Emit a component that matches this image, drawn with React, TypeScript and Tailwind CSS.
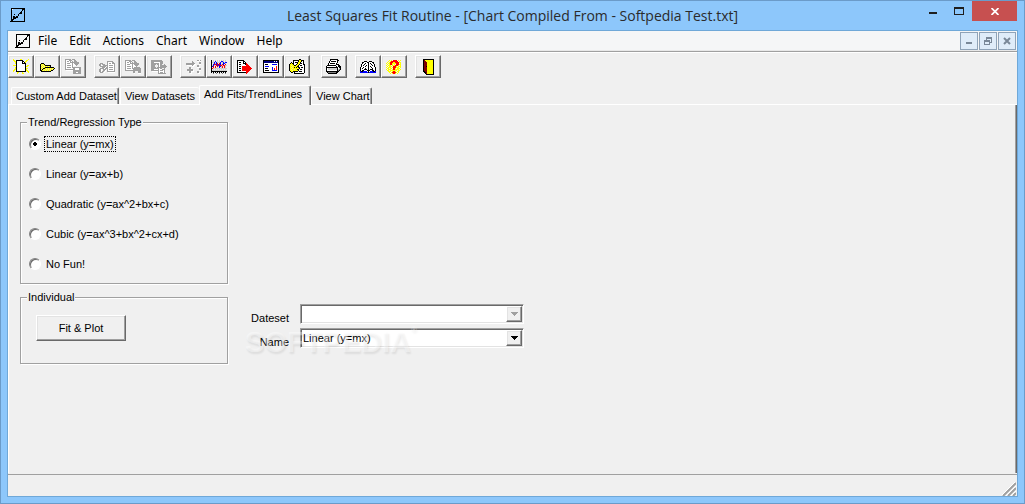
import React, { useState } from "react";

const palette: Record<string, string> = {
  K: "#000000",
  W: "#ffffff",
  G: "#a0a0a0",
  S: "#808080",
  L: "#d0d0d0",
  Y: "#ffff00",
  P: "#f5f08a",
  R: "#ff0000",
  M: "#800000",
  B: "#0000ff",
  N: "#000080",
  C: "#00d8e8",
};

// Each string is one pixel row, a dot is transparent
const icons = {
  app: [
    ".KKKKKKKKKKKKKK",
    ".KW.........KKK",
    ".K..........K.K",
    ".K.........K..K",
    ".K........KK..K",
    ".K.......KKK..K",
    ".K..K...K.....K",
    ".K......K.....K",
    ".K.KK.KK......K",
    ".K.KKKKK......K",
    ".K.KKK........K",
    ".KKK..........K",
    ".KK...........K",
    "KKKKKKKKKKKKKKK",
  ],
  newFile: [
    "Y......YY......Y",
    "YY.KKKKKKK...YY.",
    ".YYKWWWWWKK.YY..",
    "..YKWWWWWKWKY...",
    "..YKWWWWWKKKK...",
    "...KWWWWWWWWK...",
    "YYYKWWWWWWWWK.YY",
    "...KWWWWWWWWKYY.",
    "..YKWWWWWWWWK...",
    "..YKWWWWWWWWKYY.",
    ".YYKWWWWWWWWKY..",
    "YY.KWWWWWWWWKYY.",
    "Y..KKKKKKKKKK.YY",
    "....YY...Y.....Y",
    "....Y....YY.....",
  ],
  open: [
    "...............",
    ".KKK...........",
    "KYPYK..........",
    "KPYPYKKKKKK....",
    "KYPYPYPYPYK....",
    "KPYPYKKKKKKKKK.",
    "KYPKKYPYPYPYPYK",
    "KPKYPYPYPYPYPK.",
    "KKYPYPYPYPYKK..",
    ".KKKKKKKKKK....",
  ],
  saveAll: [
    "GGGGGG.GGG......",
    "GWWWGGG..GG.....",
    "GWGGWGWG.GGG....",
    "GWWWWGGGGGGGGG..",
    "GWGGGWWGWGGGGG..",
    "GWWWWWWGWWGGG...",
    "GWGGGGWGWWWG....",
    "GWWWWWWGW.......",
    "GWGGGGWGGGGGGGGG",
    "GWWWWWWWGGWWWWGG",
    "GGGGGGGGGGWWWWGG",
    ".WWWWWWWGGGGGGGG",
    "........GGGGGGGG",
    "........GGGWWGGG",
    "........GGGGGGGG",
  ],
  cut: [
    "........GGGGGG..",
    "........GWWWWGG.",
    ".GGG....GWGGWGGG",
    "GG.GGG..GWWWWWWG",
    "GGW.GGGGGWGGGGWG",
    ".GGGGGG.GWWWWWWG",
    "...GGGWGGWGGGGWG",
    ".GGGGWGGGWWWWWWG",
    "GGW.GGG.GWGGGGWG",
    "GGW.GGW.GWWWWWWG",
    "GGWGG.W.GGGGGGGG",
    ".GGG.W...WWWWWWW",
  ],
  copy: [
    "GGGGGG.GGG......",
    "GWWWGGG..GG.....",
    "GWGGWGWG.GGG....",
    "GWWWWGGGGGGGGG..",
    "GWGGGWWGWGGGGG..",
    "GWWWWWWGWWGGG...",
    "GWGGGGWGWWWG....",
    "GWWWWWWGWGGGGGG.",
    "GWGGGGWGGGGGGGGG",
    "GWWWWWWWGGGGGGGG",
    "GGGGGGGGGGGGGGGG",
    "........GG...GGG",
    "........GG...GGG",
    ".........W...WWW",
  ],
  paste: [
    "GGGGGGGGGGG.....",
    "GGGGGGGGGGGG....",
    "GGGWWWWWWGGG....",
    "GGGGGGGGWGGG....",
    "GGGGG.GGWGG..G..",
    "GGGG...GWGGGGGG.",
    "GGGG...GWGGGGGGG",
    "GGGGG.GGGGGGGGG.",
    "GGGGGGGGWGG..G..",
    "GGGWWWWGWWWGGG..",
    "GGGGGGGGWGGGWG..",
    ".WWWWWWGWWWWWG..",
    ".......GWGGGWG..",
    ".......GGGGGGGG.",
  ],
  addPoint: [
    "...........GGWG",
    "......G....WW.W",
    "......GG.....GG",
    "GGGGGGGGG....GG",
    "GGGGGGGGWW...WW",
    ".WWWWWGWW..GG..",
    "......WW...GG..",
    "...GG......WWW.",
    "...GGW.......GG",
    ".GGGGGG......GG",
    ".GGGGGGW.....WW",
    "..WGGWWW...GG..",
    "...GGW.....GGW.",
    "....WW......WW.",
  ],
  chart: [
    "K.L.L.L.L.L.L.L.",
    "K.L.B.L.L.BBL.L.",
    "KLLBLBLLLBLLBLBB",
    "K.LBLBR.RB.LBBL.",
    "K.BRRBRBRBLRB.R.",
    "KLBLLRBRBRRLRRLL",
    "KBR.R.RLBBLR.RL.",
    "K.R.R.L.B.LR.RL.",
    "KRLLLLLLLLLLLLLL",
    "K.L.L.L.L.L.L.L.",
    "KLLLLLLLLLLLLLLL",
    "KKKKKKKKKKKKKKKK",
    "K.K.K.K.K.K.K.K.",
    "..S..S..S..S..S.",
  ],
  exportData: [
    "KKKKKKK.........",
    "KWWWWWKK........",
    "KWKKWWKWK.......",
    "KWWWWWKKKR......",
    "KWKKWWWWKRR.....",
    "KWWWWWWWWRRR....",
    "KWKKWRRRRRRRR...",
    "KWWWWRRRRRRRRR..",
    "KWKKWRRRRRRRRRR.",
    "KWWWWRRRRRRRRR..",
    "KWKKWRRRRRRRR...",
    "KWWWWWWWWRRR....",
    "KKKKKKKKKRR.....",
    ".........R......",
  ],
  report: [
    "KKKKKKKKKKKKKKKK",
    "KNNNNNNNNNNWNWNK",
    "KNNNNNNNNNNNNNNK",
    "KWWWWWWWWWWWWWWK",
    "KWKKKWWWWBBBBBWK",
    "KWWWWWWWWWWWWWWK",
    "KWBBBBWWWWWWWRWK",
    "KWWWWWWWWBWWWRWK",
    "KWKKKWWWWBWRWRWK",
    "KWWWWWWWWBWRWRWK",
    "KWKKKKWWWBBBBBWK",
    "KWWWWWWWWWWWWWWK",
    "KKKKKKKKKKKKKKKK",
  ],
  edit: [
    "..........KK....",
    "....KKKKKKYYKKK.",
    "....KWWWWKYYKWK.",
    "..K.KWKKKYYKWWK.",
    ".KYKKWWWKYYKKWK.",
    "KYYYKWWKYYKWWWKK",
    "KYPYYKKYYKWKKWWK",
    "KYYPYYYYKKWWWWWK",
    "KYPYYKYKYKKWKKWK",
    "KYYPYYYYYYKWWWWK",
    "KYPYYPYYKKWKKWWK",
    "KYYPYYYYYKWWWWWK",
    ".KYYKKKKKWKKKWWK",
    "..KK.KWWWWWWWWWK",
    ".....KKKKKKKKKK.",
  ],
  print: [
    "....KKKKKKKK....",
    "....KWWWWWWKK...",
    "...KWKKKKKWK....",
    "...KWWWWWWWK....",
    "..KWKKKKKWK.....",
    "..KWWWWWWWKKK...",
    ".KKKKKKKKKWWKK..",
    "KWWWWWWWWWKWKKK.",
    "KKKKKKKKKKKKWKK.",
    "KWLLLLLLLLLKWLK.",
    "KWLLLLLLLLLKLSK.",
    "KWWWWWWWWWWKSK..",
    "KKKKKKKKKKKKK...",
    ".KSSSSSSSSKK....",
    "..KKKKKKKKK.....",
  ],
  help: [
    "....KKK..KKK....",
    "..KKWWWKKWWWKK..",
    "..KWWKWWKWKWWK..",
    ".KWWKWWWKWWKWWK.",
    ".KWKWWKWKWWWKWK.",
    ".KWWWKWWKWKWWWK.",
    "KWWKWWWWKWWKWWWK",
    "KWKWWKWWKWWWKWWK",
    "KWWWKKKWKWKKKWWK",
    "KWKKWWWKKKWWKKWK",
    "BKKBBBBWKWBBBKKB",
    "BBBBBBBBKBBBBBBB",
  ],
  about: [
    "...Y.Y.RRRR.Y.Y.",
    "..Y.YRRRRRRR.Y..",
    ".Y.YRRRYYRRRRYY.",
    "Y.YYRRYYYYRRR.Y.",
    ".Y.YRRY.Y.RRRYY.",
    "Y.YYY.YYYRRRY.Y.",
    ".Y.YYY.RRRY.YYY.",
    "Y.YYY.YRRRYYY.Y.",
    ".YY.YY.RRY.YYY..",
    "Y.YYY.YRRYYYY.Y.",
    ".YY.YYYYYYY.YY..",
    "..YYY.YRRY.YY...",
    "...Y.YRRRRY.Y...",
    "....Y.YRRY.Y....",
  ],
  exit: [
    "KKKKKKKKKKK",
    "KMYYYYYYYYK",
    "KMMYYYYYYYK",
    "KMMMYYYYYYK",
    "KMMMYYYYYYK",
    "KMMMYYYYYYK",
    "KMMMYYYYYYK",
    "KMMKYYYYYYK",
    "KMMMYYYYYYK",
    "KMMMYYYYYYK",
    "KMMMYYYYYYK",
    "KMMMYYYYYYK",
    "KKMMYYYYYYK",
    ".KKMYYYYYYK",
    "..KMYYYYYYK",
    "...KKKKKKKK",
  ],
};

type IconName = keyof typeof icons;

function PixelIcon({ name }: { name: IconName }) {
  const rows = icons[name];
  const width = Math.max(...rows.map((r) => r.length));
  return (
    <svg width={width} height={rows.length} shapeRendering="crispEdges" aria-hidden="true">
      {rows.flatMap((row, y) =>
        [...row].map((c, x) =>
          c === "." ? null : <rect key={`${x}-${y}`} x={x} y={y} width={1} height={1} fill={palette[c]} />
        )
      )}
    </svg>
  );
}

const toolGroups: { items: { icon: IconName; label: string; disabled?: boolean }[]; wide?: boolean }[] = [
  {
    items: [
      { icon: "newFile", label: "New" },
      { icon: "open", label: "Open" },
      { icon: "saveAll", label: "Save", disabled: true },
    ],
  },
  {
    items: [
      { icon: "cut", label: "Cut", disabled: true },
      { icon: "copy", label: "Copy", disabled: true },
      { icon: "paste", label: "Paste", disabled: true },
    ],
  },
  {
    wide: true,
    items: [
      { icon: "addPoint", label: "Add point", disabled: true },
      { icon: "chart", label: "Chart" },
      { icon: "exportData", label: "Export" },
      { icon: "report", label: "Report" },
      { icon: "edit", label: "Edit" },
    ],
  },
  { items: [{ icon: "print", label: "Print" }] },
  {
    items: [
      { icon: "help", label: "Help topics" },
      { icon: "about", label: "About" },
    ],
  },
  { items: [{ icon: "exit", label: "Exit" }] },
];

const raised =
  "border border-t-white border-l-white border-r-[#696969] border-b-[#696969] shadow-[inset_-1px_-1px_0_#a0a0a0,inset_1px_1px_0_#e3e3e3]";

const menus = ["File", "Edit", "Actions", "Chart", "Window", "Help"];
const fitTypes = ["Linear (y=mx)", "Linear (y=ax+b)", "Quadratic (y=ax^2+bx+c)", "Cubic (y=ax^3+bx^2+cx+d)", "No Fun!"];

const tabEdge = "border-r border-r-[#696969] shadow-[inset_-1px_0_0_#a0a0a0]";
const tabs = [
  { label: "Custom Add Dataset", className: `mr-px h-[17px] pr-px pl-1 ${tabEdge}` },
  { label: "View Datasets", className: "h-[17px] px-1" },
  { label: "Add Fits/TrendLines", className: `-mb-px h-5 bg-[#f0f0f0] pr-2 pb-[3px] pl-1 ${tabEdge}` },
  { label: "View Chart", className: `h-[17px] pr-px pl-1 ${tabEdge}` },
];

function TitleBar() {
  return (
    <header className="flex h-[30px] items-start">
      <div className="w-24 pt-[7px] pl-[2px]">
        <PixelIcon name="app" />
      </div>
      <h1 className="flex-1 text-center font-['Open_Sans',sans-serif] text-[14px] leading-[29px] whitespace-nowrap text-[#2b2b2b]">
        Least Squares Fit Routine - [Chart Compiled From - Softpedia Test.txt]
      </h1>
      <div className="flex w-24">
        <button aria-label="Minimize" className="flex h-5 w-[26px] items-center justify-center">
          <svg width="9" height="8" aria-hidden="true">
            <path d="M0 5h8v2H0z" fill="#1e1e1e" />
          </svg>
        </button>
        <button aria-label="Maximize" className="flex h-5 w-[26px] items-center justify-center">
          <svg width="10" height="8" aria-hidden="true" shapeRendering="crispEdges">
            <path d="M0 0h10v8H0zM1 2v5h8V2z" fill="#1e1e1e" fillRule="evenodd" />
          </svg>
        </button>
        <button aria-label="Close" className="flex h-5 w-[45px] shrink-0 items-center justify-center bg-[#c75050]">
          <svg width="8" height="7" aria-hidden="true">
            <path d="M0.500 0L7.500 7M7.500 0L0.500 7" stroke="#fff" strokeWidth="1.700" />
          </svg>
        </button>
      </div>
    </header>
  );
}

function MenuBar() {
  const child = "flex h-[18px] w-[18px] items-center justify-center border border-[#8fa3b8] bg-[#dfecf9]";
  return (
    <div className="flex h-5 items-center border-b border-[#e8e8e8] bg-[#f5f6f7] pr-px">
      <div className="w-[30px] pl-[7px]">
        <PixelIcon name="app" />
      </div>
      <nav className="flex flex-1 gap-3 font-['Noto_Sans',sans-serif] text-[12px] leading-4 text-black">
        {menus.map((m) => (
          <button key={m}>{m}</button>
        ))}
      </nav>
      <div className="flex gap-px">
        <button aria-label="Minimize chart" className={child}>
          <svg width="6" height="8" aria-hidden="true">
            <path d="M0 5h6v2H0z" fill="#7a8898" />
          </svg>
        </button>
        <button aria-label="Restore chart" className={child}>
          <svg width="8" height="8" aria-hidden="true" shapeRendering="crispEdges" fill="#7a8898">
            <path d="M2 0h6v6H6V5h1V2H3v1H2zM0 3h6v5H0zM1 5v2h4V5z" fillRule="evenodd" />
          </svg>
        </button>
        <button aria-label="Close chart" className={child}>
          <svg width="8" height="8" aria-hidden="true">
            <path d="M1 1L7 7M7 1L1 7" stroke="#7a8898" strokeWidth="2" />
          </svg>
        </button>
      </div>
    </div>
  );
}

function ToolBar() {
  return (
    <div role="toolbar" aria-label="Main" className="flex border-t border-[#a0a0a0] shadow-[inset_0_1px_0_#fff] pt-[3px]">
      {toolGroups.map((group, i) => (
        <div key={i} className={group.wide ? "mr-[11px] flex" : "mr-2 flex"}>
          {group.items.map((item) => (
            <button
              key={item.label}
              aria-label={item.label}
              disabled={item.disabled}
              className={`flex h-[23px] w-[26px] items-center justify-center ${raised}`}
            >
              <PixelIcon name={item.icon} />
            </button>
          ))}
        </div>
      ))}
    </div>
  );
}

function Tabs() {
  const [active, setActive] = useState(2);
  return (
    <div role="tablist" className="flex h-[27px] items-end border-b border-white pl-[3px]">
      {tabs.map((tab, i) => (
        <button
          key={tab.label}
          role="tab"
          aria-selected={i === active}
          onClick={() => setActive(i)}
          className={`rounded-t-xs border-t border-l border-t-white border-l-white whitespace-nowrap ${tab.className}`}
        >
          {tab.label}
        </button>
      ))}
    </div>
  );
}

interface GroupProps {
  title: string;
  className: string;
  children: React.ReactNode;
}

function Group({ title, className, children }: GroupProps) {
  return (
    <fieldset
      className={`w-52 border border-[#a0a0a0] shadow-[1px_1px_0_#fff,inset_1px_1px_0_#fff] ${className}`}
    >
      <legend className="ml-[6px] bg-[#f0f0f0] px-px leading-3">{title}</legend>
      {children}
    </fieldset>
  );
}

interface ComboProps {
  id: string;
  label: string;
  options: string[];
  value: string;
  onChange: (v: string) => void;
  disabled?: boolean;
}

function Combo({ id, label, options, value, onChange, disabled }: ComboProps) {
  return (
    <div className="flex h-5 items-center">
      <label htmlFor={id} className="w-[61px] pt-2 pr-[11px] text-right">
        {label}
      </label>
      <div className="relative w-56">
        <select
          id={id}
          value={value}
          disabled={disabled}
          onChange={(e) => onChange(e.target.value)}
          className="block h-5 w-full appearance-none border border-t-[#a0a0a0] border-r-white border-b-white border-l-[#a0a0a0] bg-white pl-[2px] leading-3 text-black opacity-100 shadow-[inset_1px_1px_0_#696969,inset_-1px_-1px_0_#e3e3e3]"
        >
          {options.map((o) => (
            <option key={o}>{o}</option>
          ))}
        </select>
        <span
          className={`pointer-events-none absolute top-[2px] right-[2px] flex h-4 w-4 items-center justify-center bg-[#f0f0f0] ${raised}`}
        >
          <svg width="7" height="4" shapeRendering="crispEdges" aria-hidden="true">
            <path d="M0 0h7v1H6v1H5v1H4v1H3V3H2V2H1V1H0z" fill={disabled ? "#a0a0a0" : "#000"} />
          </svg>
        </span>
      </div>
    </div>
  );
}

export default function App() {
  const [fit, setFit] = useState(fitTypes[0]);
  const [name, setName] = useState(fitTypes[0]);

  return (
    <div className="flex h-screen flex-col border border-[#6b9bc9] bg-[#8dc7fb] px-[7px] pb-[7px] font-['Liberation_Sans',sans-serif] text-[11px] leading-3 text-black">
      <TitleBar />
      <main className="flex min-h-0 flex-1 flex-col bg-[#f0f0f0] shadow-[0_0_0_1px_#6fa8d8]">
        <MenuBar />
        <ToolBar />
        <Tabs />

        <section className="flex flex-1 flex-col border-r border-l border-r-[#696969] border-l-white pt-[11px] pl-[11px] shadow-[inset_-1px_0_0_#a0a0a0]">
          <Group title="Trend/Regression Type" className="h-[168px]">
            <div className="flex flex-col gap-[14px] pt-2 pl-2">
              {fitTypes.map((type) => (
                <label key={type} className="flex h-4 items-center gap-[3px]">
                  <input
                    type="radio"
                    name="fit"
                    checked={fit === type}
                    onChange={() => setFit(type)}
                    className="h-3 w-3 appearance-none rounded-full border border-t-[#808080] border-r-white border-b-white border-l-[#808080] bg-white shadow-[inset_1px_1px_0_#696969] checked:bg-[radial-gradient(circle,#000_0_2px,#fff_2px)]"
                  />
                  <span
                    className={`border border-dotted px-px py-px whitespace-nowrap ${
                      fit === type ? "border-black" : "border-transparent"
                    }`}
                  >
                    {type}
                  </span>
                </label>
              ))}
            </div>
          </Group>

          <div className="relative flex items-start pt-[7px]">
            <Group title="Individual" className="h-[73px]">
              <button className={`mt-3 ml-[15px] h-[26px] w-[90px] ${raised}`}>Fit &amp; Plot</button>
            </Group>
            <div className="flex flex-col gap-1 pt-[13px] pl-[11px]">
              <Combo id="dataset" label="Dateset" options={[""]} value="" onChange={() => {}} disabled />
              <Combo id="name" label="Name" options={fitTypes} value={name} onChange={setName} />
            </div>
            <div
              aria-hidden="true"
              className="pointer-events-none absolute top-10 left-[225px] flex text-[29px] leading-9 font-bold text-white/40 [text-shadow:1px_2px_2px_rgb(0_0_0/0.08)]"
            >
              SOFTPEDIA<span className="text-[8px] leading-3">®</span>
            </div>
          </div>
        </section>

        <footer className="mt-px flex h-[22px] items-end justify-end border-t border-[#a0a0a0] pr-px">
          <svg width="14" height="14" aria-hidden="true">
            <path d="M1 14L14 1M6 14L14 6M11 14L14 11" stroke="#a0a0a0" strokeWidth="2" />
            <path d="M0 13L13 0M4 14L14 4M9 14L14 9" stroke="#fff" />
          </svg>
        </footer>
      </main>
    </div>
  );
}
